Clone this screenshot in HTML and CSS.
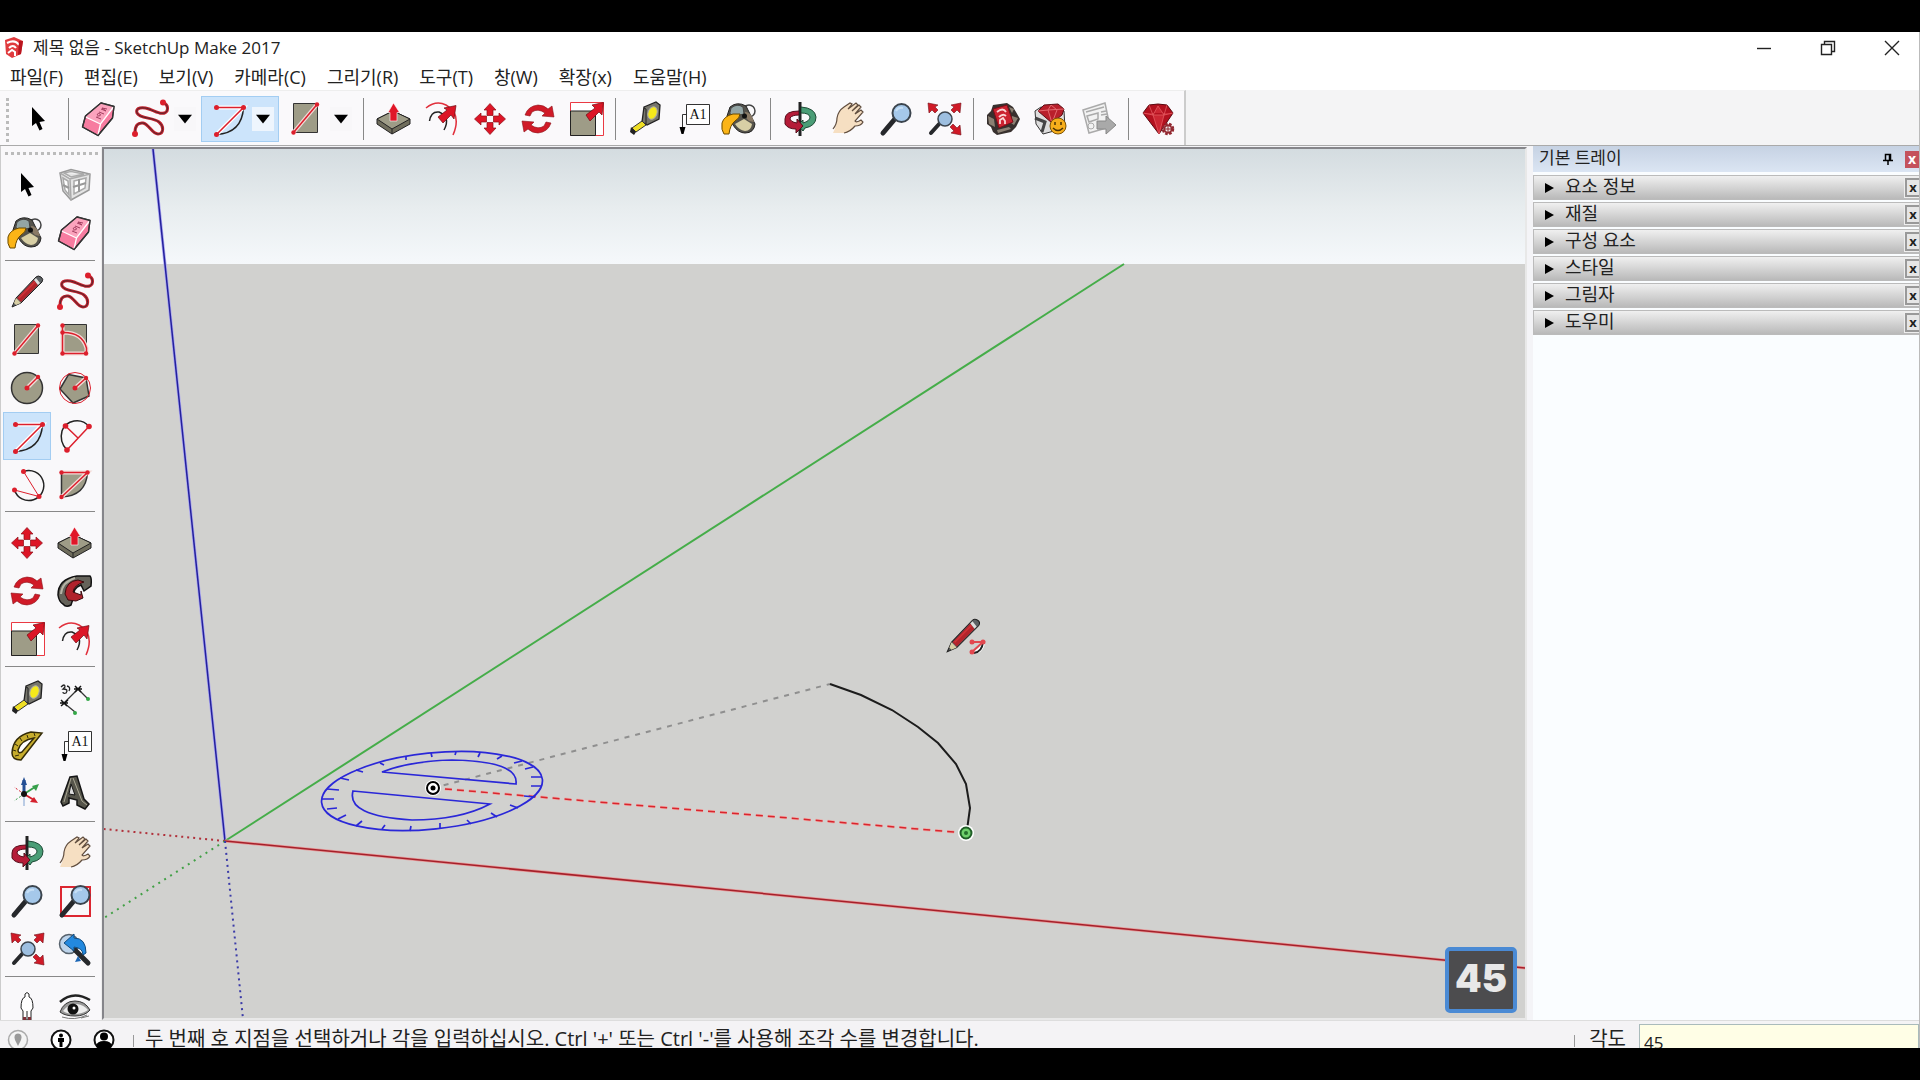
FILE: index.html
```
<!DOCTYPE html>
<html lang="ko">
<head>
    <meta charset="UTF-8">
    <title>제목 없음 - SketchUp Make 2017</title>
    <meta name="viewport" content="width=device-width, initial-scale=1.0">
    <link rel="stylesheet" href="styles.css">
</head>

<body>

<!-- icon set -->
<svg class="sprite" aria-hidden="true">
    <symbol id="i-select" viewBox="0 0 40 40">
        <path d="M14 8V27L18 24L21.500 31.500L24.500 30L21.500 23L27 22Z" fill="#000"/>
    </symbol>
    <symbol id="i-component" viewBox="0 0 40 40">
        <path d="M5 8L16 4.500L35 9L34 25L16 35L8 26Z" fill="#e4e4e4" stroke="#999" stroke-width="1.500"/>
        <path d="M5 8L15 14L35 9M15 14L16 35M9 8L16 6.500L29 9L16 12ZM8 13L13 16L14 30L10 25ZM19 16L31 13L30 23L19 29Z" fill="#fff" stroke="#aaa" stroke-width="1.500"/>
        <path d="M18 22L31 18M24 14V27M8 20L14 23" stroke="#999" stroke-width="2" fill="none"/>
    </symbol>
    <symbol id="i-paint" viewBox="0 0 40 40">
        <circle cx="28" cy="12" r="6" fill="none" stroke="#444" stroke-width="1.500"/>
        <path d="M9 8Q16 2 25 7L34 25Q33 34 24 34Q17 34 12 26L6 17Z" fill="#55534c" stroke="#222"/>
        <path d="M10 9Q16 4 22 8L23 15L10 18Q8 14 10 9Z" fill="#93a5a5" stroke="#444"/>
        <path d="M14 25L23 20L31 25Q30 32 24 32Q18 31 14 25Z" fill="#d8cfa5"/>
        <path d="M24 13Q30 12 33 23L28 22Q24 19 24 13Z" fill="#8a7a66"/>
        <circle cx="23.500" cy="17" r="2.500" fill="#111"/>
        <path d="M1 24Q3 17 12 15L19 15Q19 19 14 22Q9 26 8 35L3 35Q0 31 1 24Z" fill="#fbb416" stroke="#6b4a00"/>
    </symbol>
    <symbol id="i-eraser" viewBox="0 0 40 40">
        <path d="M22 4L35 7.500L33.500 19L19 36.500L3.500 28L6.500 17Z" fill="#f77ca0" stroke="#333" stroke-width="1.300" stroke-linejoin="round"/>
        <path d="M22 4L35 7.500L21.500 25L6.500 18Z" fill="#fba3bd"/>
        <path d="M6.500 18L21.500 25L34.500 8M21.500 25L19 36" stroke="#fff" stroke-width="1.300" fill="none"/>
        <path d="M17 18L22 20M18 16Q19 13 21 15T18 17M20 13L25 15M22 10L27 12L23 9L28 10" stroke="#a33f60" fill="none"/>
        <path d="M22 4L35 7.500L33.500 19L19 36.500L3.500 28L6.500 17Z" fill="none" stroke="#333" stroke-width="1.300" stroke-linejoin="round"/>
    </symbol>
    <symbol id="i-line" viewBox="0 0 40 40">
        <path d="M5 35L9 26L29 5Q31 3 34 5T35 10L14 31Z" fill="#5d6164" stroke="#222"/>
        <path d="M10 26L27 8L31 13L14 30Z" fill="#b3242b"/>
        <path d="M12 26L28 10" stroke="#cf3338" stroke-width="1.500"/>
        <path d="M27 8L29 6L33 11L31 13Z" fill="#ddd"/>
        <path d="M7 31L9 26L14 31L9 33Z" fill="#d8cfa5"/>
    </symbol>
    <symbol id="i-freehand" viewBox="0 0 40 40">
        <path d="M5 34Q5 23 13 24C19 25 22 35 28 35C34 35 34 27 29 23C23 18 10 20 7 14C5 8 13 8 19 10C26 13 34 17 37 12Q39 6 33 3.500" fill="none" stroke="#c0202c" stroke-width="3"/>
        <path d="M5 34Q5 23 13 24C19 25 22 35 28 35C34 35 34 27 29 23C23 18 10 20 7 14C5 8 13 8 19 10C26 13 34 17 37 12Q39 6 33 3.500" fill="none" stroke="#50282c"/>
        <circle cx="5" cy="35" r="3" fill="#dc1f2c"/><circle cx="33" cy="3.500" r="3" fill="#dc1f2c"/>
    </symbol>
    <symbol id="i-rect" viewBox="0 0 40 40">
        <path d="M7.500 4.500H31.500V33.500H7.500Z" fill="#9e9c87" stroke="#333"/>
        <path d="M7.500 33.500L31 5.500" stroke="#f3dcd8" stroke-width="4"/>
        <path d="M7.500 33.500L31 5.500" stroke="#dc1f2c" stroke-width="1.500"/>
        <circle cx="7.500" cy="33.500" r="2.200" fill="#dc1f2c"/><circle cx="31" cy="5.500" r="2.200" fill="#dc1f2c"/>
    </symbol>
    <symbol id="i-rotrect" viewBox="0 0 40 40">
        <path d="M7.500 4.500H31.500V33.500H7.500Z" fill="#9e9c87" stroke="#333"/>
        <path d="M7.500 5V33.500H31.500V28Q27 12 7.500 12.500" stroke="#f3dcd8" stroke-width="4" fill="none"/>
        <path d="M7.500 5V33.500H31.500V28Q27 12 7.500 12.500" stroke="#dc1f2c" stroke-width="1.500" fill="none"/>
        <g fill="#dc1f2c"><circle cx="7.500" cy="5.500" r="2.200"/><circle cx="7.500" cy="12.500" r="2.200"/><circle cx="7.500" cy="33.500" r="2.200"/><circle cx="31" cy="33.500" r="2.200"/></g>
    </symbol>
    <symbol id="i-circle" viewBox="0 0 40 40">
        <circle cx="20" cy="20" r="15.500" fill="#9e9c87" stroke="#333" stroke-width="1.500"/>
        <path d="M20 20L31 9" stroke="#f3dcd8" stroke-width="4"/>
        <path d="M20 20L31 9" stroke="#dc1f2c" stroke-width="1.500"/>
        <circle cx="20" cy="20" r="2.500" fill="#dc1f2c"/><circle cx="31" cy="9" r="2.200" fill="#dc1f2c"/>
    </symbol>
    <symbol id="i-polygon" viewBox="0 0 40 40">
        <path d="M13.500 6.500L31 10L34 28L18 35L5 21Z" fill="#9e9c87" stroke="#333" stroke-width="1.500"/>
        <circle cx="20" cy="20" r="15.500" fill="none" stroke="#dc1f2c"/>
        <path d="M20 20L31 10" stroke="#f3dcd8" stroke-width="4"/>
        <path d="M20 20L31 10" stroke="#dc1f2c" stroke-width="1.500"/>
        <circle cx="20" cy="20" r="2.500" fill="#dc1f2c"/><circle cx="31" cy="10" r="2.200" fill="#dc1f2c"/>
    </symbol>
    <symbol id="i-arc" viewBox="0 0 40 40">
        <path d="M35.500 8.500Q34 34 8.500 35.500" fill="none" stroke="#222" stroke-width="1.500"/>
        <path d="M8.500 8.500H35.500L8.500 35.500" fill="none" stroke="#fff" stroke-width="4"/>
        <path d="M8.500 8.500H35.500L8.500 35.500" fill="none" stroke="#dc1f2c" stroke-width="1.500"/>
        <g fill="#dc1f2c"><circle cx="8.500" cy="8.500" r="2.500"/><circle cx="35.500" cy="8.500" r="2.500"/><circle cx="8.500" cy="35.500" r="2.500"/></g>
    </symbol>
    <symbol id="i-arc2" viewBox="0 0 40 40">
        <path d="M34 10.500C26 1 11 4 7 15Q4 26 12 34" fill="none" stroke="#222" stroke-width="1.500"/>
        <path d="M34 10.500L12 34M10.500 10L23 22" stroke="#dc1f2c" stroke-width="1.500"/>
        <g fill="#dc1f2c"><circle cx="34" cy="10.500" r="2.800"/><circle cx="12" cy="34" r="2.800"/><circle cx="10.500" cy="10" r="2.800"/></g>
    </symbol>
    <symbol id="i-arc3" viewBox="0 0 40 40">
        <path d="M16.500 7.500A15 15 0 1 1 7.500 26" fill="none" stroke="#222" stroke-width="1.500"/>
        <path d="M16.500 7.500L32 32.500L7.500 26" fill="none" stroke="#dc1f2c"/>
        <g fill="#dc1f2c"><circle cx="16.500" cy="7.500" r="2.500"/><circle cx="32" cy="32.500" r="2.500"/><circle cx="7.500" cy="26" r="2.500"/></g>
    </symbol>
    <symbol id="i-pie" viewBox="0 0 40 40">
        <path d="M6.500 8.500H32.500Q31 32 6.500 33Z" fill="#9e9c87" stroke="#333" stroke-width="1.500"/>
        <path d="M6.500 8.500H32.500L6.500 33" stroke="#f3dcd8" stroke-width="4" fill="none"/>
        <path d="M6.500 8.500H32.500L6.500 33" stroke="#dc1f2c" stroke-width="1.500" fill="none"/>
        <g fill="#dc1f2c"><circle cx="6.500" cy="8.500" r="2.200"/><circle cx="32.500" cy="8.500" r="2.200"/><circle cx="6.500" cy="33" r="2.200"/></g>
    </symbol>
    <symbol id="i-move" viewBox="0 0 40 40">
        <g fill="#dd1526" stroke="#8c1018" stroke-width=".7">
            <path id="mv" d="M20 4.500L26 11H23V16.500H17V11H14Z"/>
            <use href="#mv" transform="rotate(90 20 20)"/>
            <use href="#mv" transform="rotate(180 20 20)"/>
            <use href="#mv" transform="rotate(270 20 20)"/>
        </g>
    </symbol>
    <symbol id="i-pushpull" viewBox="0 0 40 40">
        <path d="M3 20L19 12L36 20V25L18 35L3 25Z" fill="#6f6d5c" stroke="#222" stroke-linejoin="round"/>
        <path d="M3 20L19 12L36 20L18 30Z" fill="#9e9c87" stroke="#222"/>
        <path d="M18 30V35" stroke="#222"/>
        <path d="M19.500 4L25.500 13.500H23V22H16V13.500H14Z" fill="#e01628" stroke="#fff" stroke-width=".6"/>
    </symbol>
    <symbol id="i-rotate" viewBox="0 0 40 40">
        <g fill="#d01a27" stroke="#8c1018" stroke-width=".6">
            <path id="rt" d="M7 16Q10 7 20 6Q26 6 30 10L34 7L36 18L24 17L27 14Q20 9 14 13L12 17Z"/>
            <use href="#rt" transform="rotate(180 20 20)"/>
        </g>
    </symbol>
    <symbol id="i-follow" viewBox="0 0 40 40">
        <path d="M3 24Q3 8 22 5L35 5Q37 7 36 15L29 20L26 14Q17 17 18 28L16 34Q11 37 8 33Q4 31 3 24Z" fill="#65635a" stroke="#111" stroke-width="1.500"/>
        <path d="M6 23Q7 11 20 7" fill="none" stroke="#b5b2a5" stroke-width="2"/>
        <path d="M10 23Q11 10 23 9L29 11Q19 14 18 21L26 24L26 20L28 27L21 30L13 29Z" fill="#b0222c" stroke="#3b0b0e"/>
    </symbol>
    <symbol id="i-scale" viewBox="0 0 40 40">
        <path d="M4.500 3.500H37.500V36.500H4.500Z" fill="#fff" stroke="#ea3a43"/>
        <path d="M4.500 12H29.500V36.500H4.500Z" fill="#9e9c87" stroke="#222"/>
        <path d="M37.500 3.500L36 16L33 13L24 22L20 16L29 9L26 6Z" fill="#dc1526" stroke="#6d0b13" stroke-width=".7"/>
    </symbol>
    <symbol id="i-offset" viewBox="0 0 40 40">
        <path d="M4 9Q14 1 24 6Q40 15 31 36" fill="none" stroke="#e1303c" stroke-width="1.500"/>
        <path d="M7.500 22Q9 12 17 13Q29 18 22 31" fill="none" stroke="#222" stroke-width="1.500"/>
        <path d="M34 6.500L32 20L29 16L21 24L16 18L25 11L22 9Z" fill="#dc1526" stroke="#6d0b13" stroke-width=".7"/>
    </symbol>
    <symbol id="i-tape" viewBox="0 0 40 40">
        <path d="M19 8L31 3L35 6L34 20L22 26L17 23Z" fill="#77766c" stroke="#222" stroke-width="1.300"/>
        <path d="M19 9L21 10L21 25" stroke="#222" fill="none"/>
        <ellipse cx="27.500" cy="14" rx="4.500" ry="6.500" transform="rotate(20 27.500 14)" fill="#f5e91b" stroke="#aaa"/>
        <path d="M17 22L21 26L11 33L7 29Z" fill="#efdf25" stroke="#333"/>
        <path d="M6 28L11 33L9 36L5 33Z" fill="#222"/>
    </symbol>
    <symbol id="i-dim" viewBox="0 0 40 40">
        <path d="M9 25L23 11M9 25L20 34M23 11L33 21" stroke="#333" stroke-width="1.300"/>
        <path d="M6 22L12 28M13 22L6 28M5 25H13M20 8L26 14M26 8L20 14M19 11H27" stroke="#111" stroke-width="1.500"/>
        <path d="M6 9Q10 5 10 9L8 11Q14 11 11 15Q8 16 8 14M12 8Q16 9 14 13" stroke="#222" stroke-width="1.300" fill="none"/>
        <circle cx="20" cy="35" r="2" fill="#35a847"/><circle cx="33" cy="21" r="2" fill="#35a847"/>
    </symbol>
    <symbol id="i-protractor" viewBox="0 0 40 40">
        <path d="M35 7L14 34Q5 34 5 27Q6 10 24 6Z" fill="#c7ad2d" stroke="#332b08" stroke-width="1.500"/>
        <path d="M27 12L15 26Q11 28 11 24Q14 14 27 12Z" fill="#fff" stroke="#332b08" stroke-width="1.500"/>
        <path d="M8 30L12 29M6 24L9 25M8 18L11 20M13 12L15 15M20 9L21 12M27 7L28 10" stroke="#332b08"/>
    </symbol>
    <symbol id="i-text" viewBox="0 0 40 40">
        <path d="M13.500 5.500H36.500V25.500H13.500ZM13.500 15.500H9.500V29" fill="#fff" stroke="#333"/>
        <path d="M6.500 28H12.500L10.500 35H8.500Z" fill="#000"/>
        <text x="25" y="20" text-anchor="middle" class="a1">A1</text>
    </symbol>
    <symbol id="i-axes" viewBox="0 0 40 40">
        <path d="M17 20V6" stroke="#244f94" stroke-width="3"/><path d="M17 3L20 11H14Z" fill="#244f94"/>
        <path d="M17 20L28 13" stroke="#38a04b" stroke-width="2"/><path d="M32 10L29 17L25 12Z" fill="#38a04b"/>
        <path d="M17 20L27 26" stroke="#d5202d" stroke-width="2"/><path d="M31 29L23 28L27 23Z" fill="#d5202d"/>
        <path d="M17 20L7 13" stroke="#d5202d" stroke-dasharray="2 2"/><path d="M17 20L7 27" stroke="#38a04b" stroke-dasharray="2 2"/><path d="M17 22V32" stroke="#a6bede" stroke-width="1.500"/>
        <circle cx="17" cy="20" r="3" fill="#111"/>
    </symbol>
    <symbol id="i-3dtext" viewBox="0 0 40 40">
        <path d="M15 3L22 2L29 25L34 30L30 35L22 31L22 26L14 24L14 29L8 32L6 28Z" fill="#55544a" stroke="#161616" stroke-width="1.500"/>
        <path d="M16 10L20 21L14 20Z" fill="#ddd" stroke="#161616"/>
        <path d="M18 4L27 27L32 31M16 4L9 28" fill="none" stroke="#aaa794"/>
    </symbol>
    <symbol id="i-orbit" viewBox="0 0 40 40">
        <path d="M20 3V37" stroke="#222" stroke-width="3"/>
        <path d="M21 8Q35 9 36 18Q36 27 25 29L23 32L18 26L23 21V24Q30 22 30 18Q29 14 21 14Z" fill="#4a9d76" stroke="#1d4a35"/>
        <path d="M19 12Q5 12 5 20V25Q8 30 16 30V34L23 27L17 20V24Q10 23 10 19Q12 16 19 16Z" fill="#b51c38" stroke="#550e1b"/>
        <path d="M20 3V22" stroke="#222" stroke-width="2"/>
    </symbol>
    <symbol id="i-pan" viewBox="0 0 40 40">
        <path d="M5 34Q9 26 9 19Q10 12 16 8L22 4L24 5L20 10L28 4L30 6L24 12L31 6L33 8L27 15L33 11L35 13L27 22Q28 24 33 21L35 23Q33 27 27 27Q22 33 16 34Z" fill="#f6dfc2"/>
        <path d="M5 30Q9 25 9 19Q10 12 16 8L22 4L24 5L20 10L28 4L30 6L24 12L31 6L33 8L27 15L33 11L35 13L27 22Q28 24 33 21L35 23Q33 27 27 27Q22 33 16 34" fill="none" stroke="#604d3e" stroke-width="1.200"/>
    </symbol>
    <symbol id="i-zoom" viewBox="0 0 40 40">
        <path d="M18 21L7 34" stroke="#26282b" stroke-width="5" stroke-linecap="round"/>
        <circle cx="25.500" cy="14" r="9" fill="#a5c8ea" stroke="#3b444d" stroke-width="2"/>
        <path d="M20 12Q22 8 27 9" stroke="#c6dff5" stroke-width="2" fill="none"/>
    </symbol>
    <symbol id="i-zoomwin" viewBox="0 0 40 40">
        <path d="M6 6H35V35H6Z" fill="none" stroke="#dc2630" stroke-width="2"/>
        <use href="#i-zoom" width="40" height="40"/>
    </symbol>
    <symbol id="i-extents" viewBox="0 0 40 40">
        <path d="M16 24L7 34" stroke="#26282b" stroke-width="4" stroke-linecap="round"/>
        <circle cx="21" cy="20" r="7" fill="#9dbfe0" stroke="#3b444d" stroke-width="1.500"/>
        <g fill="#d01a27" stroke="#74101a" stroke-width=".6"><path d="M4 4L14 6L11 8L14 11L11 14L8 11L5 14Z"/><path d="M37 4L27 6L30 8L27 11L30 14L33 11L36 14Z"/><path d="M37 36L27 34L30 32L26 28L29 25L33 29L36 26Z"/></g>
    </symbol>
    <symbol id="i-previous" viewBox="0 0 40 40">
        <circle cx="14" cy="15" r="9.500" fill="#bcd3ea" stroke="#56616c" stroke-width="1.500"/>
        <path d="M20 21L33 34" stroke="#26282b" stroke-width="5" stroke-linecap="round"/>
        <path d="M9 14L19 5V9Q31 9 31 24L28 26Q28 19 19 18V22Z" fill="#2389df" stroke="#124b7d"/>
        <path d="M23 27L20 33L26 32" fill="#1b65b5"/>
    </symbol>
    <symbol id="i-person" viewBox="0 0 40 40">
        <path d="M18 6Q20 3 22 6V9Q26 10 26 20L24 23L24 32H16L16 23L14 20Q14 10 18 9Z" fill="#fff" stroke="#222"/>
        <path d="M20 23V32" stroke="#222"/>
        <path d="M16 29H19V32H16ZM21 29H24V32H21Z" fill="#7d3038"/>
    </symbol>
    <symbol id="i-look" viewBox="0 0 40 40">
        <path d="M5 14Q18 2 35 12" stroke="#222" stroke-width="2.500" fill="none"/>
        <path d="M5 24Q9 13 20 13Q30 13 35 22Q30 28 20 28Q10 28 5 24Z" fill="#999" stroke="#333"/>
        <path d="M8 23Q14 15 22 16Q29 17 33 22Q27 26 20 26Q12 26 8 23Z" fill="#eee"/>
        <circle cx="18" cy="21" r="5.500" fill="#111"/><circle cx="19" cy="20" r="1.500" fill="#fff"/>
        <path d="M7 29Q20 33 32 27M26 30L34 28" stroke="#777" fill="none"/>
    </symbol>
    <symbol id="i-warehouse" viewBox="0 0 40 40">
        <path d="M4 16L8 12L10 6L24 4L30 8L33 13L37 20L33 28L28 33L14 36L10 33L8 28L4 25Z" fill="#37302e"/>
        <path d="M5 17L11 20L12 28L6 25ZM29 17L35 19L31 26L28 24ZM14 31L26 28L28 30L15 34ZM26 8L31 10L29 14Z" fill="#8b8073"/>
        <path d="M10 10L24 6L30 23L16 29Z" fill="#cb2230" stroke="#7a0f18"/>
        <path d="M14 13Q20 8 23 13M16 18Q20 14 23 17M17 25V21L20 19L22 22V25" stroke="#fbd6d6" stroke-width="1.800" fill="none"/>
    </symbol>
    <symbol id="i-extension" viewBox="0 0 40 40">
        <path d="M4 12L10 8L33 12L34 29L12 35L5 25Z" fill="#ddd" stroke="#333"/>
        <path d="M7 12L13 6L27 5L33 10L31 16L21 24Z" fill="#b91f2b" stroke="#5a0d14"/>
        <path d="M7 12L17 11L33 10M17 11L21 24L26 11L20 6Z" stroke="#e46a70" fill="none"/>
        <path d="M4 19L14 23L11 33" stroke="#444" stroke-width="3" fill="none"/>
        <circle cx="27" cy="27" r="8" fill="#f7ae1b" stroke="#7b5306"/>
        <path d="M22 29Q27 34 32 29M24 23V26M30 23V26" stroke="#4a3205" stroke-width="1.500" fill="none"/>
    </symbol>
    <symbol id="i-layout" viewBox="0 0 40 40">
        <path d="M4 11L26 4L31 28L10 34Z" fill="#f2f2f2" stroke="#aaa" stroke-width="1.500"/>
        <path d="M7 13L25 8M8 17L19 14V20L10 23ZM22 13L27 12M22 16L28 15" stroke="#aaa" stroke-width="1.500" fill="none"/>
        <circle cx="12" cy="27" r="3" fill="none" stroke="#aaa"/>
        <path d="M18 22H27V17L37 26L27 35V30H18Z" fill="#a9a9a9" stroke="#888"/>
    </symbol>
    <symbol id="i-ruby" viewBox="0 0 40 40">
        <path d="M5 14L11 6Q20 4 29 6L35 14L21 35Z" fill="#b3111f" stroke="#5a0910"/>
        <path d="M5 14L15 16L20 7L26 16L35 14M15 16L21 35L26 16ZM11 6L15 16M29 6L26 16" stroke="#e35a61" fill="#cc2733" stroke-width=".8"/>
        <circle cx="30" cy="30" r="5" fill="#c87a7e" stroke="#912831" stroke-width="2.500" stroke-dasharray="2.500 1.500"/>
        <circle cx="30" cy="30" r="3.500" fill="#eee" stroke="#912831" stroke-width="1.500"/><path d="M27 30H33M30 27V33" stroke="#912831"/>
    </symbol>
    <symbol id="i-drop" viewBox="0 0 16 10"><path d="M0 0H16L8 10Z" fill="#000"/></symbol>
</svg>

<div class="app">

    <header class="titlebar">
        <svg class="logo" viewBox="0 0 20 22"><path d="M1 3L10 0L19 4L17 17L8 21L2 17Z" fill="#e03b3e"/><path d="M3 6Q11 2 15 8M5 11Q9 7 12 11M4 16L8 13L11 15V19" stroke="#fff" stroke-width="2" fill="none"/><path d="M15 4L19 4L17 17L14 18Z" fill="#b9151f"/></svg>
        <h1>제목 없음 - SketchUp Make 2017</h1>
        <div class="win-buttons">
            <button aria-label="최소화"><svg viewBox="0 0 16 16"><path d="M1 8.500H15"/></svg></button>
            <button aria-label="이전 크기로"><svg viewBox="0 0 16 16"><path d="M1.500 4.500H11.500V14.500H1.500ZM4.500 4V1.500H14.500V11.500H12"/></svg></button>
            <button aria-label="닫기"><svg viewBox="0 0 16 16"><path d="M1 1L15 15M15 1L1 15"/></svg></button>
        </div>
    </header>

    <nav class="menu">
        <button>파일(F)</button>
        <button>편집(E)</button>
        <button>보기(V)</button>
        <button>카메라(C)</button>
        <button>그리기(R)</button>
        <button>도구(T)</button>
        <button>창(W)</button>
        <button>확장(x)</button>
        <button>도움말(H)</button>
    </nav>

    <div class="toolbar">
        <div class="tools">
            <button aria-label="선택"><svg><use href="#i-select"/></svg></button>
            <i class="sep wide"></i>
            <button aria-label="지우개"><svg><use href="#i-eraser"/></svg></button>
            <div class="split">
                <button aria-label="자유곡선"><svg><use href="#i-freehand"/></svg></button>
                <button class="drop" aria-label="선 도구"><svg><use href="#i-drop"/></svg></button>
            </div>
            <div class="split on">
                <button aria-label="호"><svg><use href="#i-arc"/></svg></button>
                <button class="drop" aria-label="호 도구"><svg><use href="#i-drop"/></svg></button>
            </div>
            <div class="split">
                <button aria-label="사각형"><svg><use href="#i-rect"/></svg></button>
                <button class="drop" aria-label="도형 도구"><svg><use href="#i-drop"/></svg></button>
            </div>
            <i class="sep wide"></i>
            <button aria-label="밀기/끌기"><svg><use href="#i-pushpull"/></svg></button>
            <button aria-label="오프셋"><svg><use href="#i-offset"/></svg></button>
            <button aria-label="이동"><svg><use href="#i-move"/></svg></button>
            <button aria-label="회전"><svg><use href="#i-rotate"/></svg></button>
            <button aria-label="배율"><svg><use href="#i-scale"/></svg></button>
            <i class="sep"></i>
            <button aria-label="줄자 도구"><svg><use href="#i-tape"/></svg></button>
            <button aria-label="텍스트"><svg><use href="#i-text"/></svg></button>
            <button aria-label="페인트통"><svg><use href="#i-paint"/></svg></button>
            <i class="sep"></i>
            <button aria-label="궤도"><svg><use href="#i-orbit"/></svg></button>
            <button aria-label="이동 보기"><svg><use href="#i-pan"/></svg></button>
            <button aria-label="확대/축소"><svg><use href="#i-zoom"/></svg></button>
            <button aria-label="범위 확대/축소"><svg><use href="#i-extents"/></svg></button>
            <i class="sep"></i>
            <button aria-label="3D Warehouse"><svg><use href="#i-warehouse"/></svg></button>
            <button aria-label="Extension Warehouse"><svg><use href="#i-extension"/></svg></button>
            <button aria-label="LayOut"><svg><use href="#i-layout"/></svg></button>
            <i class="sep"></i>
            <button aria-label="확장 관리자"><svg><use href="#i-ruby"/></svg></button>
        </div>
    </div>

    <main>
        <aside class="side">
            <div class="pair">
                <button aria-label="선택"><svg><use href="#i-select"/></svg></button>
                <button aria-label="구성 요소 만들기"><svg><use href="#i-component"/></svg></button>
                <button aria-label="페인트통"><svg><use href="#i-paint"/></svg></button>
                <button aria-label="지우개"><svg><use href="#i-eraser"/></svg></button>
            </div>
            <div class="pair">
                <button aria-label="선"><svg><use href="#i-line"/></svg></button>
                <button aria-label="자유곡선"><svg><use href="#i-freehand"/></svg></button>
                <button aria-label="사각형"><svg><use href="#i-rect"/></svg></button>
                <button aria-label="회전된 사각형"><svg><use href="#i-rotrect"/></svg></button>
                <button aria-label="원"><svg><use href="#i-circle"/></svg></button>
                <button aria-label="다각형"><svg><use href="#i-polygon"/></svg></button>
                <button class="on" aria-label="호"><svg><use href="#i-arc"/></svg></button>
                <button aria-label="2점 호"><svg><use href="#i-arc2"/></svg></button>
                <button aria-label="3점 호"><svg><use href="#i-arc3"/></svg></button>
                <button aria-label="파이"><svg><use href="#i-pie"/></svg></button>
            </div>
            <div class="pair">
                <button aria-label="이동"><svg><use href="#i-move"/></svg></button>
                <button aria-label="밀기/끌기"><svg><use href="#i-pushpull"/></svg></button>
                <button aria-label="회전"><svg><use href="#i-rotate"/></svg></button>
                <button aria-label="따라가기"><svg><use href="#i-follow"/></svg></button>
                <button aria-label="배율"><svg><use href="#i-scale"/></svg></button>
                <button aria-label="오프셋"><svg><use href="#i-offset"/></svg></button>
            </div>
            <div class="pair">
                <button aria-label="줄자 도구"><svg><use href="#i-tape"/></svg></button>
                <button aria-label="치수"><svg><use href="#i-dim"/></svg></button>
                <button aria-label="각도기"><svg><use href="#i-protractor"/></svg></button>
                <button aria-label="텍스트"><svg><use href="#i-text"/></svg></button>
                <button aria-label="축"><svg><use href="#i-axes"/></svg></button>
                <button aria-label="3D 텍스트"><svg><use href="#i-3dtext"/></svg></button>
            </div>
            <div class="pair">
                <button aria-label="궤도"><svg><use href="#i-orbit"/></svg></button>
                <button aria-label="이동 보기"><svg><use href="#i-pan"/></svg></button>
                <button aria-label="확대/축소"><svg><use href="#i-zoom"/></svg></button>
                <button aria-label="창 확대/축소"><svg><use href="#i-zoomwin"/></svg></button>
                <button aria-label="범위 확대/축소"><svg><use href="#i-extents"/></svg></button>
                <button aria-label="이전"><svg><use href="#i-previous"/></svg></button>
            </div>
            <div class="pair">
                <button aria-label="카메라 배치"><svg><use href="#i-person"/></svg></button>
                <button aria-label="둘러보기"><svg><use href="#i-look"/></svg></button>
            </div>
        </aside>

        <section class="viewport">
            <svg class="scene" viewBox="104 148 1421 870" preserveAspectRatio="xMinYMin slice" fill="none">
                <!-- axes -->
                <path d="M153 148L225 840" stroke="#a9a5f2" stroke-width="3"/>
                <path d="M153 148L225 840" stroke="#24209c" stroke-width="1.500"/>
                <path d="M225 840L1124 263" stroke="#45ad49" stroke-width="2"/>
                <path d="M225 840L1526 967" stroke="#e89a9a" stroke-width="3"/>
                <path d="M225 840L1526 967" stroke="#a5202a" stroke-width="1.500"/>
                <path d="M225 840L104 828" stroke="#b0303a" stroke-width="2" stroke-dasharray="2 4"/>
                <path d="M225 840L104 917" stroke="#42a046" stroke-width="2" stroke-dasharray="2 5"/>
                <path d="M225 840L243 1018" stroke="#3b3ba8" stroke-width="2" stroke-dasharray="2 4"/>

                <!-- arc being drawn -->
                <path d="M433 787L830 683" stroke="#8f8f8f" stroke-width="2" stroke-dasharray="5 6"/>
                <path d="M433 787L966 832" stroke="#efaaa7" stroke-width="3" stroke-dasharray="7 5"/>
                <path d="M433 787L966 832" stroke="#d8262e" stroke-width="1.500" stroke-dasharray="7 5"/>
                <path d="M830 683L861 694L892 709L918 726L938 742L956 763L966 783L970 807L967 829" stroke="#1c1c1c" stroke-width="2"/>

                <!-- protractor -->
                <g stroke="#2a27d8" stroke-width="1.700">
                    <ellipse cx="432" cy="790" rx="111" ry="38" transform="rotate(-6 432 790)"/>
                    <path d="M516 783L382 771Q410 760 452 759Q519 760 516 783ZM353 790L490 803Q460 819 412 819Q346 815 353 790Z"/>
                    <path d="M456 751L455 754M431 752L432 756M406 755V759M380 762L384 764M356 769L363 771M340 777L349 779M327 788L339 789M322 798H334M327 808L337 807M338 818L346 814M356 825L362 820M382 828L385 824M410 830L411 825M440 827V822M471 823L467 819M497 816L491 812M518 807L510 804M535 796L524 795M542 785H531M542 776H531M533 766L525 768M522 760L514 762M502 755L497 758M480 752L478 756"/>
                </g>
                <circle cx="433" cy="787" r="8" fill="#fff"/>
                <circle cx="433" cy="787" r="6" stroke="#000" stroke-width="2"/>
                <circle cx="433" cy="787" r="2.500" fill="#000"/>
                <circle cx="966" cy="832" r="8" fill="#fff"/>
                <circle cx="966" cy="832" r="5.500" fill="#6fd06c" stroke="#1f5e26" stroke-width="2"/>
                <circle cx="966" cy="832" r="2" fill="#25702c"/>

                <!-- pencil cursor -->
                <use href="#i-line" x="942" y="614" width="42" height="42"/>
                <path d="M983 641Q982 651 972 651" stroke="#fff" stroke-width="4"/>
                <path d="M983 641Q982 651 974 652" stroke="#222" stroke-width="2"/>
                <path d="M972 641H983L972 651" stroke="#e2474f" stroke-width="2"/>
                <g fill="#e2474f"><circle cx="972" cy="641" r="2.500"/><circle cx="983" cy="641" r="2.500"/><circle cx="972" cy="651" r="2.500"/></g>
            </svg>
            <div class="key">45</div>
        </section>

        <aside class="tray">
            <div class="tray-head">
                <h2>기본 트레이</h2>
                <button class="pin" aria-label="고정"><svg viewBox="0 0 10 12"><path d="M2.500 7V1.500H7.500V7M6.500 1V7M0 7.500H10M5 8V12" fill="none" stroke="#000" stroke-width="1.500"/></svg></button>
                <button class="close" aria-label="트레이 닫기">x</button>
            </div>
            <div class="panel"><button class="name">요소 정보</button><button class="x" aria-label="요소 정보 닫기">x</button></div>
            <div class="panel"><button class="name">재질</button><button class="x" aria-label="재질 닫기">x</button></div>
            <div class="panel"><button class="name">구성 요소</button><button class="x" aria-label="구성 요소 닫기">x</button></div>
            <div class="panel"><button class="name">스타일</button><button class="x" aria-label="스타일 닫기">x</button></div>
            <div class="panel"><button class="name">그림자</button><button class="x" aria-label="그림자 닫기">x</button></div>
            <div class="panel"><button class="name">도우미</button><button class="x" aria-label="도우미 닫기">x</button></div>
        </aside>
    </main>

    <footer class="status">
        <button aria-label="위치 정보"><svg viewBox="0 0 22 22"><circle cx="11" cy="11" r="9.500" fill="#f4f4f4" stroke="#aaa" stroke-width="1.500"/><path d="M11 17L8 11Q6 5 11 4.500Q16 5 14 11Z" fill="#999"/></svg></button>
        <button aria-label="크레딧"><svg viewBox="0 0 22 22"><circle cx="11" cy="11" r="9.500" fill="#fff" stroke="#111" stroke-width="2"/><circle cx="11" cy="6.500" r="2" fill="#000"/><path d="M8 9H14V13H12.500V18H9.500V13H8Z" fill="#000"/></svg></button>
        <button aria-label="로그인"><svg viewBox="0 0 22 22"><circle cx="11" cy="11" r="9.500" fill="#fff" stroke="#111" stroke-width="2"/><circle cx="11" cy="7.500" r="4" fill="#000"/><path d="M3 17Q4 12 11 12Q18 12 19 17L15 21H7Z" fill="#000"/></svg></button>
        <p class="hint">두 번째 호 지점을 선택하거나 각을 입력하십시오. Ctrl '+' 또는 Ctrl '-'를 사용해 조각 수를 변경합니다.</p>
        <label for="vcb">각도</label>
        <input id="vcb" type="text" value="45">
    </footer>

</div>

</body>
</html>
```
FILE: styles.css
```
* {
    box-sizing: border-box;
}

body {
    margin: 0;
    padding: 32px 0;
    height: 100vh;
    background: #000;
    color: #222;
    font-family: "Open Sans", "Noto Sans CJK KR", sans-serif;
    font-size: 18px;
}

button {
    margin: 0;
    padding: 0;
    border: none;
    background: none;
    color: inherit;
    font: inherit;
}

.sprite {
    position: absolute;
    width: 0;
    height: 0;
}

.app {
    height: 100%;
    display: flex;
    flex-direction: column;
    overflow: hidden;
    background: #fff;
    border-right: 1px solid #bbb;
}

/* title + menu */
.titlebar {
    flex: none;
    height: 31px;
    display: flex;
    align-items: center;
    padding-left: 4px;
}

.logo {
    width: 20px;
    height: 22px;
}

h1 {
    margin: 0 auto 0 9px;
    font-size: 17px;
    font-weight: 400;
    line-height: 28px;
}

.win-buttons {
    display: flex;
    gap: 10px;
}

.win-buttons button {
    width: 54px;
    height: 30px;
    display: grid;
    place-items: center;
}

.win-buttons svg {
    width: 16px;
    height: 16px;
    fill: none;
    stroke: #222;
    stroke-width: 1.4;
}

.menu {
    flex: none;
    height: 27px;
    display: flex;
    align-items: center;
    gap: 21px;
    padding-left: 10px;
    line-height: 26px;
    white-space: nowrap;
}

/* toolbars */
.toolbar {
    flex: none;
    height: 55px;
    background: #f4f4f5;
    display: flex;
}

.tools {
    display: flex;
    align-items: center;
    padding: 2px 2px 0 14px;
    background: #faf9fb;
    border-top: 1px solid #eee;
    border-right: 2px solid #ccc;
    position: relative;
}

.tools::before {
    content: "";
    position: absolute;
    left: 6px;
    top: 7px;
    bottom: 3px;
    border-left: 3px dotted #bbb;
}

.tools button {
    width: 48px;
    height: 44px;
    display: grid;
    place-items: center;
}

.tools svg,
.side svg {
    width: 40px;
    height: 40px;
}

.sep {
    width: 1px;
    height: 42px;
    margin: 0 5px;
    background: #888;
}

.wide {
    margin: 0 6px;
}

.split {
    display: flex;
    align-items: center;
    padding: 0 4px 0 2px;
    border: 1px solid transparent;
}

.split.on {
    background: #cce4fb;
    border-color: #a3cdf2;
}

.tools .drop {
    width: 22px;
    height: 24px;
    background: #f8f7f9;
}

.tools .on .drop {
    background: #eef5fd;
}

.tools .drop svg {
    width: 14px;
    height: 10px;
}

.a1 {
    font: 14px "Liberation Serif", serif;
    fill: #111;
}

main {
    flex: 1;
    min-height: 0;
    display: flex;
    background: #f4f4f7;
    border-top: 1px solid #aaa;
}

.side {
    flex: none;
    width: 102px;
    padding: 15px 0 0 2px;
    background: #f9f8fa;
    border-left: 1px solid #ccc;
    border-right: 1px solid #eee;
    overflow: hidden;
    position: relative;
}

.side::before {
    content: "";
    position: absolute;
    left: 4px;
    right: 3px;
    top: 6px;
    border-top: 3px dotted #bbb;
}

.pair {
    display: grid;
    grid-template-columns: 48px 48px;
    grid-auto-rows: 48px;
}

.pair + .pair::before {
    content: "";
    grid-column: 1 / 3;
    height: 1px;
    margin: 3px 4px 0 2px;
    background: #888;
}

.pair + .pair {
    grid-template-rows: 11px;
}

.side button {
    display: grid;
    place-items: center;
    border: 1px solid transparent;
}

.side .on {
    background: #cce4fb;
    border-color: #a3cdf2;
}

/* drawing area */
.viewport {
    flex: 1;
    min-width: 0;
    margin-top: 1px;
    position: relative;
    border: 2px solid #85858a;
    border-right-color: #e8e8e8;
    border-bottom-color: #e8e8e8;
    background: linear-gradient(#d4dce0, #e8edef 60px, #f5f8fb 115px, #d1d1cf 115px);
}

.scene {
    display: block;
    width: 100%;
    height: 100%;
}

.key {
    position: absolute;
    right: 8px;
    bottom: 5px;
    width: 72px;
    height: 66px;
    display: grid;
    place-items: center;
    padding-bottom: 4px;
    background: #4c4c4e;
    border: 4px solid #4a8ad4;
    border-radius: 5px;
    color: #e8e8e8;
    font: 900 38px Inter, sans-serif;
}

/* tray */
.tray {
    flex: none;
    width: 386px;
    margin-left: 6px;
    background: #fafdff;
    overflow: hidden;
}

.tray-head {
    height: 26px;
    margin-bottom: 3px;
    display: flex;
    align-items: center;
    padding-left: 6px;
    background: linear-gradient(#c6d2e3, #dbe5f3);
}

h2 {
    margin: 0 auto 0 0;
    padding-bottom: 2px;
    font-size: 17px;
    font-weight: 400;
    line-height: 24px;
}

.pin {
    width: 10px;
    margin-right: 12px;
}

.pin svg {
    display: block;
    width: 10px;
    height: 12px;
}

.close {
    width: 14px;
    height: 17px;
    background: #c4525c;
    color: #fff;
    font-size: 14px;
    font-weight: 700;
    line-height: 14px;
}

.panel {
    height: 25px;
    margin-bottom: 2px;
    display: flex;
    align-items: center;
    background: linear-gradient(#f0f0f0, #b9b9b9);
    border: 1px solid #bbb;
    border-right: none;
}

.name {
    flex: 1;
    display: flex;
    align-items: center;
    gap: 11px;
    padding: 0 0 3px 11px;
    line-height: 20px;
    text-align: left;
}

.name::before {
    content: "";
    margin-top: 3px;
    border: 5px solid transparent;
    border-left: 9px solid #000;
    border-right: none;
}

.x {
    width: 14px;
    height: 19px;
    border: 2px solid #999;
    border-right: none;
    outline: 1px solid #eee;
    background: #e6e6e6;
    font-size: 13px;
    font-weight: 700;
    line-height: 13px;
}

/* status bar */
.status {
    flex: none;
    height: 28px;
    display: flex;
    align-items: flex-start;
    background: #f4f3f5;
    border-top: 1px solid #ddd;
    overflow: hidden;
    white-space: nowrap;
}

.status button {
    width: 22px;
    margin: 8px 13px 0 7px;
}

.status button + button {
    margin-left: 8px;
}

.status svg {
    display: block;
    width: 22px;
    height: 22px;
}

.hint {
    flex: 1;
    margin: 6px 0 0;
    padding-left: 17px;
    line-height: 24px;
    font-size: 20px;
    background: linear-gradient(#999, #999) 5px 8px / 1px 12px no-repeat;
}

.status label {
    padding: 6px 13px 0 15px;
    line-height: 24px;
    font-size: 20px;
    background: linear-gradient(#999, #999) 0 14px / 1px 12px no-repeat;
}

.status input {
    width: 280px;
    height: 36px;
    margin-top: 3px;
    padding: 0 4px;
    border: 1px solid #abb;
    background: #fffee6;
    color: #222;
    font: inherit;
    font-size: 17px;
}
```
